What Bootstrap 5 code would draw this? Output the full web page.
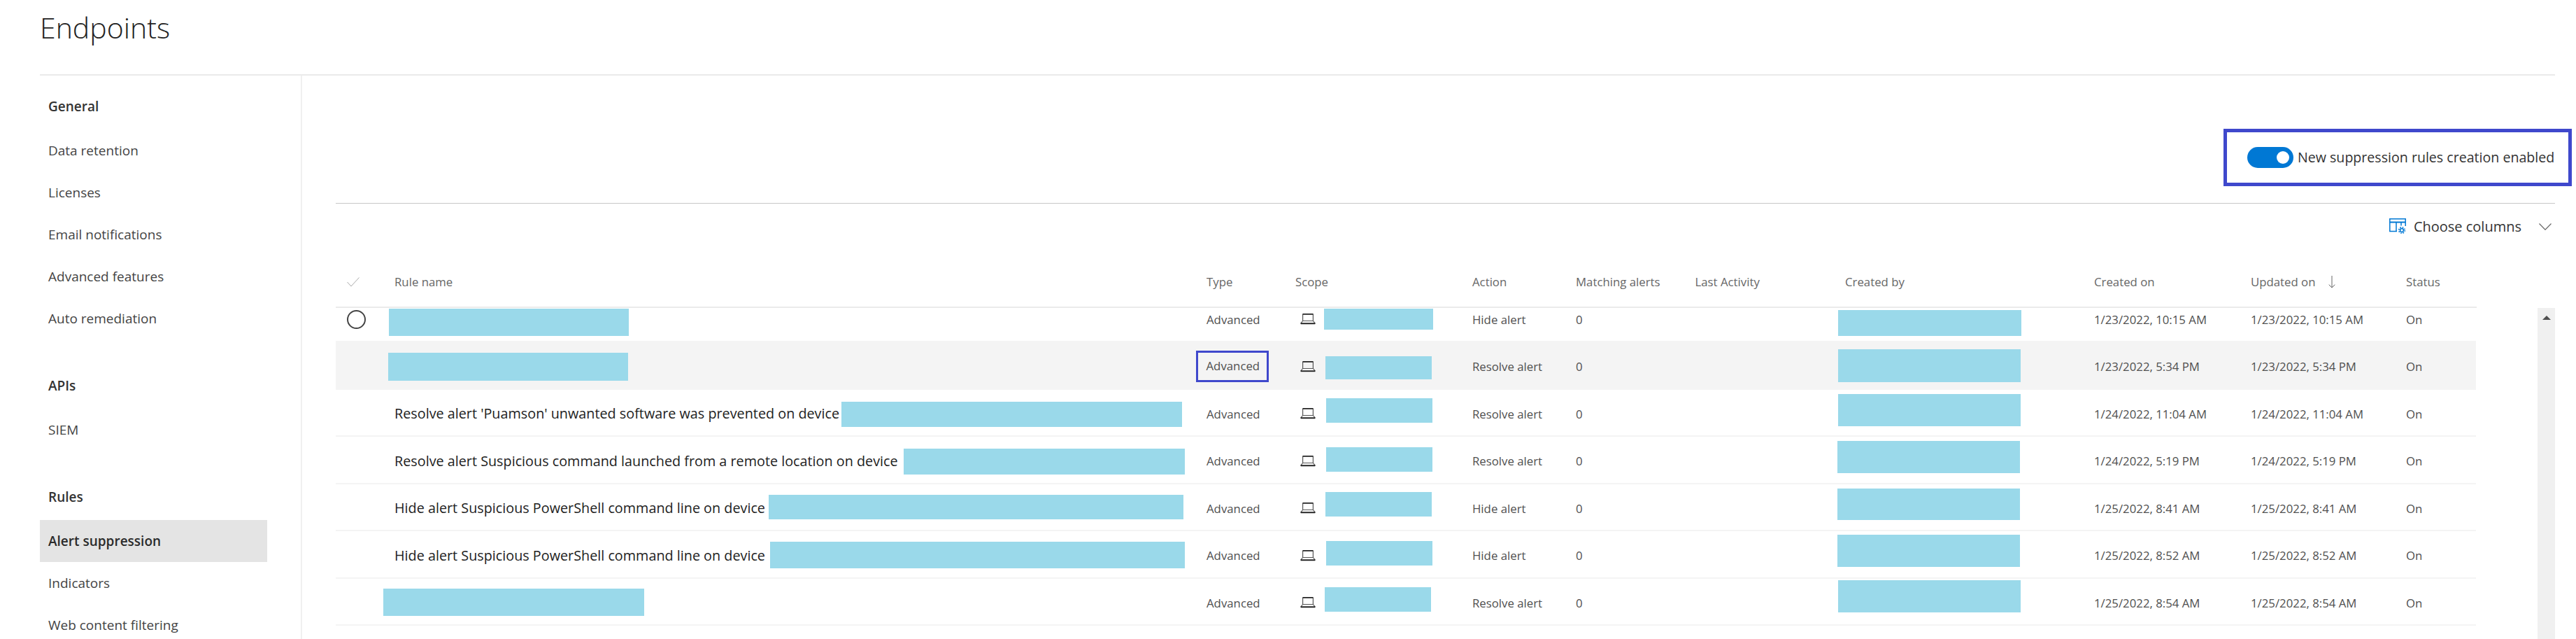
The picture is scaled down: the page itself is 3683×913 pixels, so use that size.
<!DOCTYPE html>
<html lang="en">
<head>
    <meta charset="UTF-8">
    <meta name="viewport" content="width=device-width, initial-scale=1.0">
    <title>Endpoints</title>

    <link href="https://cdn.jsdelivr.net/npm/bootstrap@5.3.0/dist/css/bootstrap.min.css" rel="stylesheet">
    <script src="https://cdn.jsdelivr.net/npm/bootstrap@5.3.0/dist/js/bootstrap.bundle.min.js"></script>
    <style>
        html, body { height: 913px; overflow: hidden; }
        body { font-family: "Open Sans", "Noto Sans", sans-serif; color: #333; background: #fff; }

        .page-head { height: 108px; margin: 0 30px 0 57px; border-bottom: 2px solid #eaeaea; }
        .page-title { font-size: 41px; font-weight: 300; color: #222; margin: 0; padding: 12px 0 0 0; line-height: 54px; }
        .page-body { height: 805px; }

        .side-bar { width: 432px; padding: 14px 0 0 57px; border-right: 2px solid #f0f0f0; flex: none; }
        .side-group { margin-bottom: 36px; }
        .side-head, .side-link { display: block; width: 325px; height: 60px; line-height: 60px; padding: 0 0 0 12px; font-size: 19px; white-space: nowrap; }
        .side-head { font-weight: 600; color: #333; margin-bottom: 3px; }
        .side-link { color: #444; font-weight: 400; text-decoration: none; }
        .side-link.is-current { background: #e4e4e4; color: #2b2b2b; font-weight: 600; }

        .main-pane { width: 3221px; padding-left: 48px; flex: none; }
        .switch-box { border: 5px solid #3f48cc; height: 82px; width: 498px; margin: 76px -24px 24px 0; padding: 0 19px 0 29px; }
        .form-switch.switch-line { padding: 0; margin: 0; min-height: 0; gap: 6px; }
        .form-switch.switch-line .switch-input { width: 66px; height: 30px; margin: 0; float: none; border: 0; background-color: #0078d4; flex: none;
            --bs-form-switch-bg: url("data:image/svg+xml,%3csvg xmlns='http://www.w3.org/2000/svg' viewBox='-4 -4 8 8'%3e%3ccircle r='2.4' fill='%23fff'/%3e%3c/svg%3e"); }
        .switch-text { font-size: 19.6px; color: #333; white-space: nowrap; margin: 0; }

        .tool-row { height: 66px; border-top: 1px solid #c8c8c8; padding-right: 5px; }
        .columns-btn { padding: 0; border: 0; gap: 11px; font-size: 20px; color: #333; }
        .columns-btn:hover { color: #333; }
        .chevron-mark { margin-left: 14px; }

        .rules-table.table { width: 3061px; table-layout: fixed; border-collapse: separate; border-spacing: 0; margin: 0; }
        .rules-table.table > :not(caption) > * > * { padding: 0; border-bottom: 0; white-space: nowrap; vertical-align: middle; box-shadow: none; }
        .head-table.table { margin-top: 14px; }
        .head-table.table > :not(caption) > * > * { height: 70px; padding-bottom: 2px; font-size: 16.8px; font-weight: 400; color: #666; border-bottom: 2px solid #ebebeb; }
        .body-table.table { margin-top: -18.5px; }
        .body-table.table > :not(caption) > * > * { height: 67.5px; padding-top: 4px; font-size: 16.8px; font-weight: 400; color: #505050; border-bottom: 2px solid #f4f4f4; }
        .body-table.table > :not(caption) > * > .name-cell { font-size: 19.8px; color: #222; }
        .body-table.table > :not(caption) > .row-hover > * { background: #f4f4f4; }

        .rows-clip { height: 474px; width: 3061px; overflow: hidden; }
        .redact { position: absolute; background: #9ad9ea; }
        .scroll-rail { width: 25px; height: 474px; margin-left: 88px; background: #f0f0f0; padding-top: 11px; flex: none; }
        .scroll-up { width: 0; height: 0; margin: 0 auto; border: 6px solid transparent; border-top: 0; border-bottom-color: #505050; }

        .type-mark { display: inline-block; margin-left: -15px; width: 104px; height: 45px; line-height: 38px; padding-left: 11.5px; border: 3.5px solid #3f48cc; }
        .pick-ring { margin-left: 16px; display: block; }
        .tick-mark { margin-left: 16px; display: block; }
        .laptop-mark { margin-left: 7px; display: block; }
        .sort-mark { margin-left: 14px; vertical-align: -3px; }
    </style>
</head>
<body>
    <header class="page-head">
        <h1 class="page-title">Endpoints</h1>
    </header>

    <div class="page-body d-flex">
        <nav class="side-bar">
            <div class="side-group">
                <div class="side-head">General</div>
                <a class="side-link" href="#">Data retention</a>
                <a class="side-link" href="#">Licenses</a>
                <a class="side-link" href="#">Email notifications</a>
                <a class="side-link" href="#">Advanced features</a>
                <a class="side-link" href="#">Auto remediation</a>
            </div>
            <div class="side-group">
                <div class="side-head">APIs</div>
                <a class="side-link" href="#">SIEM</a>
            </div>
            <div class="side-group">
                <div class="side-head">Rules</div>
                <a class="side-link is-current" href="#">Alert suppression</a>
                <a class="side-link" href="#">Indicators</a>
                <a class="side-link" href="#">Web content filtering</a>
            </div>
        </nav>

        <main class="main-pane position-relative">
            <div class="d-flex justify-content-end">
                <div class="switch-box d-flex align-items-center">
                    <div class="form-check form-switch switch-line d-flex align-items-center">
                        <input class="form-check-input switch-input" type="checkbox" role="switch" id="new-rules" checked>
                        <label class="switch-text" for="new-rules">New suppression rules creation enabled</label>
                    </div>
                </div>
            </div>

            <div class="tool-row d-flex justify-content-end align-items-center">
                <button class="btn columns-btn d-flex align-items-center" type="button">
                    <svg width="24" height="23" viewBox="0 0 24 23" fill="none" stroke="#0078d4" stroke-width="1.5">
                        <path d="M11 18.5H.8V.8h22.4V11"/>
                        <path d="M.8 5.5h22.4" stroke-width="2"/>
                        <path d="M10 5.5v13M17 5.5v5"/>
                        <circle cx="18" cy="17" r="2.4"/>
                        <circle cx="18" cy="17" r="4.3" stroke-width="1.6" stroke-dasharray="1.7 1.7"/>
                    </svg>
                    <span>Choose columns</span>
                    <svg class="chevron-mark" width="18" height="10" viewBox="0 0 18 10" fill="none" stroke="#666" stroke-width="1.2">
                        <path d="M.5.5 9 9.2 17.5.5"/>
                    </svg>
                </button>
            </div>

            <table class="table rules-table head-table">
                <colgroup id="head-cols"></colgroup>
                <thead>
                    <tr>
                        <th>
                            <svg class="tick-mark" width="18" height="14" viewBox="0 0 18 14" fill="none" stroke="#aaa" stroke-width="1">
                                <path d="M.5 7 6 13 17.5.5"/>
                            </svg>
                        </th>
                        <th>Rule name</th>
                        <th>Type</th>
                        <th>Scope</th>
                        <th>Action</th>
                        <th>Matching alerts</th>
                        <th>Last Activity</th>
                        <th>Created by</th>
                        <th>Created on</th>
                        <th>
                            Updated on
                            <svg class="sort-mark" width="10" height="18" viewBox="0 0 10 18" fill="none" stroke="#666" stroke-width="1">
                                <path d="M5 0v17M.7 12.7 5 17l4.3-4.3"/>
                            </svg>
                        </th>
                        <th>Status</th>
                    </tr>
                </thead>
            </table>

            <div class="d-flex">
                <div class="rows-clip">
                    <table class="table rules-table body-table">
                        <colgroup id="body-cols"></colgroup>
                        <tbody id="rules-body"></tbody>
                    </table>
                </div>
                <div class="scroll-rail">
                    <div class="scroll-up"></div>
                </div>
            </div>
            <div id="redactions"></div>
        </main>
    </div>

    <script>
        const col_widths = [84, 1161, 127, 253, 148, 170.5, 214.5, 356, 224, 222, 101]

        // page coords of the blue patches: [x1, x2, y1, y2]
        const rules = [
            { name: '', action: 'Hide alert', created: '1/23/2022, 10:15 AM', patches: [[556, 899, 441, 480], [1893, 2049, 441, 471], [2628, 2890, 443, 480]] },
            { name: '', action: 'Resolve alert', created: '1/23/2022, 5:34 PM', patches: [[555, 898, 504, 544], [1895, 2047, 509, 542], [2628, 2889, 499, 546]] },
            { name: "Resolve alert 'Puamson' unwanted software was prevented on device", action: 'Resolve alert', created: '1/24/2022, 11:04 AM', patches: [[1203, 1690, 574, 610], [1896, 2048, 569, 604], [2628, 2889, 563, 609]] },
            { name: 'Resolve alert Suspicious command launched from a remote location on device', action: 'Resolve alert', created: '1/24/2022, 5:19 PM', patches: [[1292, 1694, 641, 678], [1896, 2048, 639, 674], [2627, 2888, 630, 676]] },
            { name: 'Hide alert Suspicious PowerShell command line on device', action: 'Hide alert', created: '1/25/2022, 8:41 AM', patches: [[1099, 1692, 707, 742], [1895, 2047, 703, 738], [2627, 2888, 698, 743]] },
            { name: 'Hide alert Suspicious PowerShell command line on device', action: 'Hide alert', created: '1/25/2022, 8:52 AM', patches: [[1101, 1694, 774, 812], [1896, 2048, 773, 808], [2627, 2888, 764, 810]] },
            { name: '', action: 'Resolve alert', created: '1/25/2022, 8:54 AM', patches: [[548, 921, 841, 880], [1894, 2046, 839, 874], [2628, 2889, 829, 875]] }
        ]

        const laptop = `<svg class="laptop-mark" width="22" height="16" viewBox="0 0 22 16" fill="none" stroke="#555" stroke-width="1.2">
            <path d="M3.6 10.5V1h14.8v9.5"/><path d="M3.6 .8h14.8" stroke="#111" stroke-width="1.4"/>
            <path d="M3.6 10.5.8 14h20.4l-2.8-3.5z" fill="#fff"/><path d="M.8 14.2h20.4" stroke="#111" stroke-width="1.4"/>
            <path d="M.8 15.5h20.4" stroke="#ccc" stroke-width="1"/></svg>`
        const ring = `<svg class="pick-ring" width="27" height="27" viewBox="0 0 27 27" fill="none" stroke="#444" stroke-width="2"><circle cx="13.5" cy="13.5" r="12.5"/></svg>`

        function build_cols(id) {
            let cols = document.getElementById(id)
            for (let i = 0; i < col_widths.length; ++i) {
                let col = document.createElement('col')
                col.style.width = col_widths[i] + 'px'
                cols.appendChild(col)
            }
        }

        function build_rows() {
            let body = document.getElementById('rules-body')
            let layer = document.getElementById('redactions')
            let origin = document.querySelector('.main-pane').getBoundingClientRect()

            for (let i = 0; i < rules.length; ++i) {
                let rule = rules[i]
                let type = i == 1 ? '<span class="type-mark">Advanced</span>' : 'Advanced'
                let row = document.createElement('tr')
                if (i == 1) row.className = 'row-hover'
                row.innerHTML = `<td>${i == 0 ? ring : ''}</td>
                    <td class="name-cell">${rule.name}</td>
                    <td>${type}</td>
                    <td>${laptop}</td>
                    <td>${rule.action}</td>
                    <td>0</td>
                    <td></td>
                    <td></td>
                    <td>${rule.created}</td>
                    <td>${rule.created}</td>
                    <td>On</td>`
                body.appendChild(row)

                for (let p of rule.patches) {
                    let patch = document.createElement('div')
                    patch.className = 'redact'
                    patch.style.left = (p[0] - origin.left) + 'px'
                    patch.style.top = (p[2] - origin.top) + 'px'
                    patch.style.width = (p[1] - p[0]) + 'px'
                    patch.style.height = (p[3] - p[2]) + 'px'
                    layer.appendChild(patch)
                }
            }
        }

        build_cols('head-cols')
        build_cols('body-cols')
        build_rows()
    </script>
</body>
</html>
